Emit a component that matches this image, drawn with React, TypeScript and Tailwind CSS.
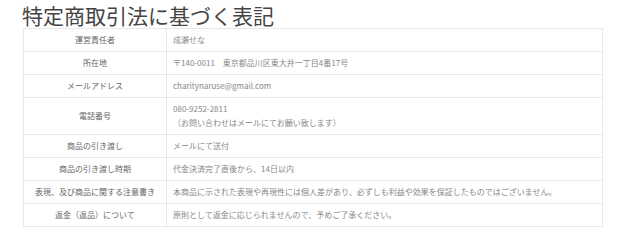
const rows: { label: string; value: string[] }[] = [
  { label: "運営責任者", value: ["成瀬せな"] },
  { label: "所在地", value: ["〒140-0011　東京都品川区東大井一丁目4番17号"] },
  { label: "メールアドレス", value: ["charitynaruse@gmail.com"] },
  { label: "電話番号", value: ["080-9252-2811", "（お問い合わせはメールにてお願い致します）"] },
  { label: "商品の引き渡し", value: ["メールにて送付"] },
  { label: "商品の引き渡し時期", value: ["代金決済完了直後から、14日以内"] },
  {
    label: "表現、及び商品に関する注意書き",
    value: ["本商品に示された表現や再現性には個人差があり、必ずしも利益や効果を保証したものではございません。"],
  },
  { label: "返金（返品）について", value: ["原則として返金に応じられませんので、予めご了承ください。"] },
];

export default function App() {
  return (
    <div
      className="h-[245px] w-[640px] bg-white"
      style={{ fontFamily: '"Noto Sans CJK JP", "Noto Sans", sans-serif' }}
    >
      <h1 className="pl-[22px] pt-[2px] text-[21px] leading-[26px] font-normal text-[#444]">
        特定商取引法に基づく表記
      </h1>
      <table className="ml-[23px] w-[580px] border-collapse text-[8px] leading-[14px]">
        <tbody>
          {rows.map((row) => (
            <tr key={row.label} className="border border-[#e8e8e8]">
              <td className="w-[143px] border-r border-[#e8e8e8] py-[4px] text-center text-[#666]">
                {row.label}
              </td>
              <td className="py-[4px] pl-[6px] text-[#888]">
                {row.value.map((line) => (
                  <div key={line}>{line}</div>
                ))}
              </td>
            </tr>
          ))}
        </tbody>
      </table>
    </div>
  );
}
